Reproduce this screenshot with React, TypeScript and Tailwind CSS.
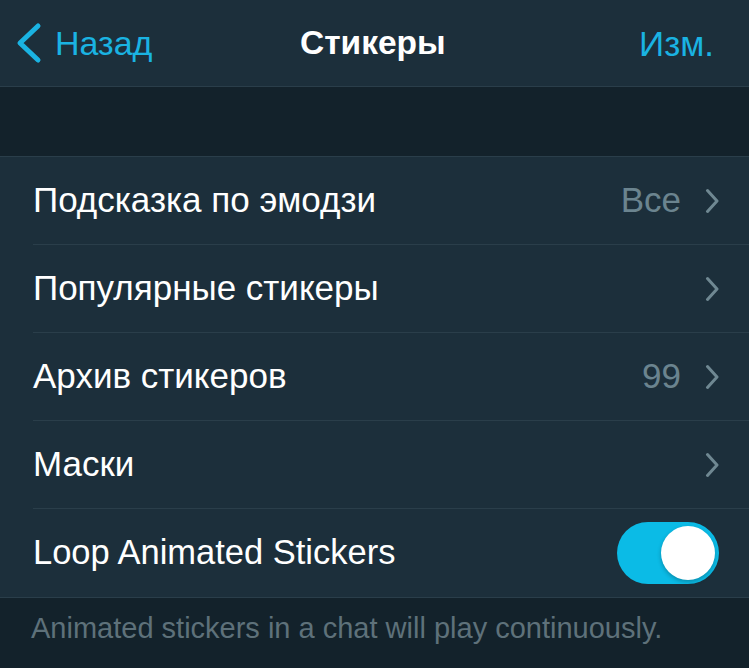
const rows = [
  { label: "Подсказка по эмодзи", value: "Все" },
  { label: "Популярные стикеры", value: "" },
  { label: "Архив стикеров", value: "99" },
  { label: "Маски", value: "" },
];

const Chevron = () => (
  <svg width="14" height="26" viewBox="0 0 14 26" fill="none">
    <path d="M2.5 2.5 L12 13 L2.5 23.5" stroke="#6f8892" strokeWidth="3" strokeLinecap="round" strokeLinejoin="round" />
  </svg>
);

const App = () => {
  return (
    <div
      className="w-[749px] h-[668px] bg-[#13222b] overflow-hidden"
      style={{ fontFamily: '"Liberation Sans", "Noto Sans", sans-serif' }}
    >
      {/* Nav bar */}
      <div className="relative h-[87px] bg-[#1c2f3b] border-b border-[#2a3e4a] flex items-center justify-between pl-[13px]">
        <div className="flex items-center gap-[12px] text-[#1ab3e2]">
          <svg width="30" height="42" viewBox="0 0 30 42" fill="none">
            <path d="M25 4 L7 21 L25 38" stroke="#1ab3e2" strokeWidth="5" strokeLinecap="round" strokeLinejoin="round" />
          </svg>
          <span className="text-[34px] leading-none">Назад</span>
        </div>
        <span className="absolute left-[300px] text-[33.5px] leading-none font-bold text-white">Стикеры</span>
        <span className="text-[35px] leading-none text-[#1ab3e2] pr-[35px]">Изм.</span>
      </div>

      {/* Spacer section */}
      <div className="h-[69px]" />

      {/* List */}
      <div className="bg-[#1c2f3b] border-t border-[#2a3e4a] border-b">
        {rows.map((r) => (
          <div key={r.label} className="pl-[33px]">
            <div className="h-[88px] flex items-center justify-between pr-[30px] border-b border-[#2a3e4a]">
              <span className="text-[35px] text-white">{r.label}</span>
              <div className="flex items-center gap-[24px] text-[#6b848f]">
                {r.value && <span className="text-[35px]">{r.value}</span>}
                <Chevron />
              </div>
            </div>
          </div>
        ))}
        <div className="h-[88px] flex items-center justify-between pl-[33px] pr-[30px]">
          <span className="text-[34.5px] text-white">Loop Animated Stickers</span>
          <div className="w-[102px] h-[62px] rounded-full bg-[#0bbbe6] flex items-center justify-end pr-[4px]">
            <div className="w-[54px] h-[54px] rounded-full bg-white shadow-[0_2px_4px_rgba(0,0,0,0.25)]" />
          </div>
        </div>
      </div>

      {/* Footer */}
      <p className="pl-[31px] pt-[16px] text-[29px] leading-none text-[#5e717a]">
        Animated stickers in a chat will play continuously.
      </p>
    </div>
  );
};

export default App;
